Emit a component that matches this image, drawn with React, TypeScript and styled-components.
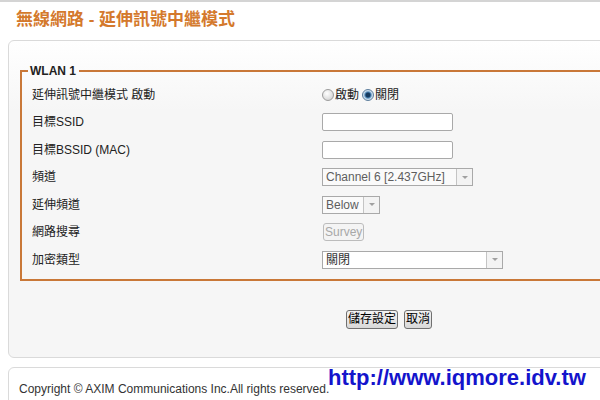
import styled, { createGlobalStyle } from 'styled-components'

const GlobalStyle = createGlobalStyle`
  html, body {
    margin: 0;
    padding: 0;
    background: #fff;
    overflow: hidden;
  }
  body {
    font-family: "Liberation Sans", "Noto Sans CJK TC", Arial, sans-serif;
    font-size: 12px;
    color: #222;
  }
`

const Page = styled.div`
  position: relative;
  width: 780px;
  height: 400px;
`

const Header = styled.div`
  box-sizing: border-box;
  height: 40px;
  border-top: 2px solid #d4d4d4;
  padding: 8px 0 0 16px;
`

const Title = styled.h1`
  margin: 0;
  font-size: 17px;
  line-height: 20px;
  font-weight: bold;
  color: #d4792c;
`

const Panel = styled.div`
  margin-left: 8px;
  width: 763px;
  border: 1px solid #dadada;
  border-radius: 6px;
  background: linear-gradient(to bottom, #ffffff 0, #f6f6f6 70px, #f6f6f6 100%);
  padding: 23px 0 28px 11px;
`

const Fieldset = styled.fieldset`
  margin: 0;
  border: 2px solid #c97838;
  padding: 3px 0 5px 10px;
`

const Legend = styled.legend`
  margin-left: -4px;
  padding: 0 3px 0 2px;
  font-size: 12px;
  line-height: 14px;
  font-weight: bold;
  color: #222;
`

const Grid = styled.div`
  display: grid;
  grid-template-columns: 290px 1fr;
  grid-auto-rows: 27.5px;
  align-items: center;
`

const Label = styled.div`
  font-size: 12px;
  line-height: 14px;
  color: #222;
`

const Control = styled.div`
  display: flex;
  align-items: center;
  font-size: 12px;
  line-height: 14px;
`

const RadioOption = styled.label`
  display: inline-flex;
  align-items: center;
  margin-right: 3px;
`

const Radio = styled.span<{ $checked?: boolean }>`
  display: inline-block;
  box-sizing: border-box;
  width: 12px;
  height: 12px;
  border-radius: 50%;
  margin-right: 1px;
  border: 1px solid ${(p) => (p.$checked ? '#5c7d9c' : '#9c9c9c')};
  background: ${(p) =>
    p.$checked
      ? 'radial-gradient(circle at 50% 50%, #163a5e 0, #163a5e 28%, #4d84b4 42%, #c6dbec 60%, #e6e6e6 100%)'
      : 'radial-gradient(circle at 40% 35%, #ffffff 0, #e2e2e2 55%, #c8c8c8 100%)'};
`

const TextInput = styled.input`
  box-sizing: border-box;
  width: 131px;
  height: 18px;
  border: 1px solid #a9a9a9;
  border-radius: 2px;
  background: #fff;
  padding: 0 3px;
  font-size: 12px;
  outline: none;
`

const Select = styled.div<{ $width: number; $muted?: boolean }>`
  box-sizing: border-box;
  display: flex;
  align-items: stretch;
  width: ${(p) => p.$width}px;
  height: 18px;
  border: 1px solid #a9a9a9;
  background: ${(p) => (p.$muted ? '#fafafa' : '#fff')};
`

const SelectText = styled.span<{ $muted?: boolean }>`
  flex: 1;
  padding-left: 3px;
  font-size: 12px;
  line-height: 16px;
  color: ${(p) => (p.$muted ? '#5e5e5e' : '#333')};
  white-space: nowrap;
  overflow: hidden;
`

const SelectArrow = styled.span`
  box-sizing: border-box;
  width: 16px;
  border-left: 1px solid #c4c4c4;
  background: #f3f3f3;
  display: flex;
  align-items: center;
  justify-content: center;
  &::after {
    content: '';
    border-left: 3px solid transparent;
    border-right: 3px solid transparent;
    border-top: 3px solid #a0a0a0;
  }
`

const SurveyButton = styled.button`
  box-sizing: border-box;
  height: 18px;
  margin-left: 1px;
  padding: 0 1px;
  border: 1px solid #bcbcbc;
  border-radius: 3px;
  background: #f4f4f4;
  color: #a8a8a8;
  font-family: inherit;
  font-size: 12px;
  line-height: 14px;
`

const ButtonRow = styled.div`
  display: flex;
  gap: 6px;
  margin-top: 29px;
  padding-left: 326px;
`

const ActionButton = styled.button`
  box-sizing: border-box;
  height: 19px;
  padding: 0 1px;
  border: 1px solid #707070;
  border-radius: 3px;
  background: linear-gradient(to bottom, #f3f3f3 0, #e6e6e6 50%, #d8d8d8 100%);
  color: #000;
  font-family: inherit;
  font-size: 12px;
  line-height: 15px;
`

const Footer = styled.div`
  margin: 9px 0 0 8px;
  width: 763px;
  height: 60px;
  border: 1px solid #dadada;
  border-radius: 6px;
  background: #fff;
  padding: 14px 0 0 10px;
  font-size: 12px;
  line-height: 14px;
  color: #333;
`

const Watermark = styled.div`
  position: absolute;
  left: 328px;
  top: 367px;
  font-family: "Liberation Sans", Arial, sans-serif;
  font-size: 22px;
  line-height: 22px;
  font-weight: bold;
  color: #1414cc;
  white-space: nowrap;
`

const App = () => {
  return (
    <Page>
      <GlobalStyle />
      <Header>
        <Title>無線網路 - 延伸訊號中繼模式</Title>
      </Header>
      <Panel>
        <Fieldset>
          <Legend>WLAN 1</Legend>
          <Grid>
            <Label>延伸訊號中繼模式 啟動</Label>
            <Control>
              <RadioOption>
                <Radio />
                啟動
              </RadioOption>
              <RadioOption>
                <Radio $checked />
                關閉
              </RadioOption>
            </Control>

            <Label>目標SSID</Label>
            <Control>
              <TextInput type="text" />
            </Control>

            <Label>目標BSSID (MAC)</Label>
            <Control>
              <TextInput type="text" />
            </Control>

            <Label>頻道</Label>
            <Control>
              <Select $width={151} $muted>
                <SelectText $muted>Channel 6 [2.437GHz]</SelectText>
                <SelectArrow />
              </Select>
            </Control>

            <Label>延伸頻道</Label>
            <Control>
              <Select $width={58} $muted>
                <SelectText $muted>Below</SelectText>
                <SelectArrow />
              </Select>
            </Control>

            <Label>網路搜尋</Label>
            <Control>
              <SurveyButton disabled>Survey</SurveyButton>
            </Control>

            <Label>加密類型</Label>
            <Control>
              <Select $width={181}>
                <SelectText>關閉</SelectText>
                <SelectArrow />
              </Select>
            </Control>
          </Grid>
        </Fieldset>
        <ButtonRow>
          <ActionButton>儲存設定</ActionButton>
          <ActionButton>取消</ActionButton>
        </ButtonRow>
      </Panel>
      <Footer>Copyright © AXIM Communications Inc.All rights reserved.</Footer>
      <Watermark>http://www.iqmore.idv.tw</Watermark>
    </Page>
  )
}

export default App
